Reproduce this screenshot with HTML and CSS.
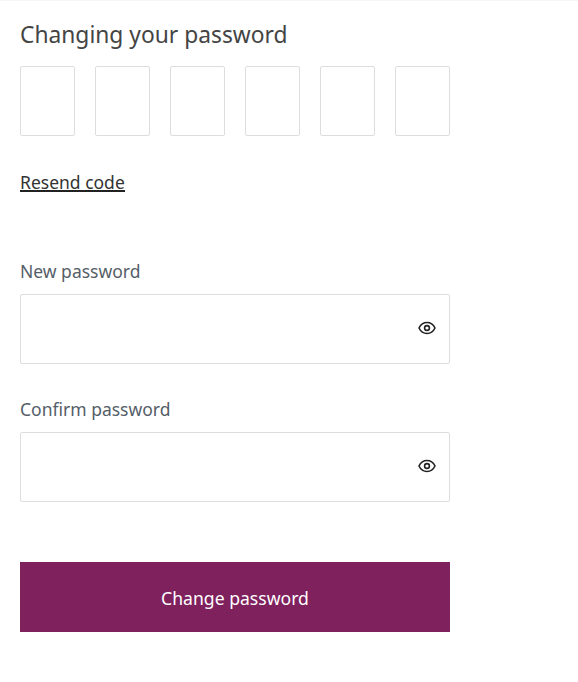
FILE: index.html
```html
<!DOCTYPE html>
<html lang="en">
<head>
<meta charset="utf-8">
<title>Changing your password</title>
<link rel="stylesheet" href="styles.css">
</head>
<body>
<main class="page">
  <h1 class="title">Changing your password</h1>
  <div class="code-row">
    <input class="code-box" type="text" maxlength="1" aria-label="Digit 1">
    <input class="code-box" type="text" maxlength="1" aria-label="Digit 2">
    <input class="code-box" type="text" maxlength="1" aria-label="Digit 3">
    <input class="code-box" type="text" maxlength="1" aria-label="Digit 4">
    <input class="code-box" type="text" maxlength="1" aria-label="Digit 5">
    <input class="code-box" type="text" maxlength="1" aria-label="Digit 6">
  </div>
  <a class="resend" href="#">Resend code</a>
  <div class="field field-first">
    <label class="label" for="new">New password</label>
    <div class="input-wrap">
      <input class="input" id="new" type="password">
      <svg class="eye" viewBox="0 0 18 14" width="18" height="14" aria-hidden="true"><path d="M1 7C2.7 3.5 5.5 1.5 9 1.5S15.3 3.5 17 7C15.3 10.5 12.5 12.5 9 12.5S2.7 10.5 1 7Z" fill="none" stroke="#222" stroke-width="1.6"/><circle cx="9" cy="7" r="2.4" fill="none" stroke="#222" stroke-width="1.6"/></svg>
    </div>
  </div>
  <div class="field">
    <label class="label" for="confirm">Confirm password</label>
    <div class="input-wrap">
      <input class="input" id="confirm" type="password">
      <svg class="eye" viewBox="0 0 18 14" width="18" height="14" aria-hidden="true"><path d="M1 7C2.7 3.5 5.5 1.5 9 1.5S15.3 3.5 17 7C15.3 10.5 12.5 12.5 9 12.5S2.7 10.5 1 7Z" fill="none" stroke="#222" stroke-width="1.6"/><circle cx="9" cy="7" r="2.4" fill="none" stroke="#222" stroke-width="1.6"/></svg>
    </div>
  </div>
  <button class="submit" type="button">Change password</button>
</main>
</body>
</html>
```
FILE: styles.css
```css
* { box-sizing: border-box; }
html, body { margin: 0; padding: 0; background: #fff; }
body { font-family: "Noto Sans", "Open Sans", sans-serif; }
.page {
  padding: 0 128px 0 20px;
  border-top: 1px solid #f5f5f5;
  display: flex;
  flex-direction: column;
  align-items: stretch;
}
.title {
  margin: 18px 0 0;
  font-size: 22.8px;
  line-height: 32px;
  font-weight: 400;
  color: #444;
}
.code-row {
  margin-top: 15px;
  display: flex;
  gap: 20px;
}
.code-box {
  width: 55px;
  height: 70px;
  border: 1px solid #ddd;
  border-radius: 2px;
  background: #fff;
  padding: 0;
}
.resend {
  align-self: flex-start;
  margin-top: 34px;
  font-size: 17.5px;
  line-height: 24px;
  color: #333;
  text-decoration: none;
  border-bottom: 2px solid #222;
  height: 22px;
}
.field { display: flex; flex-direction: column; margin-top: 33px; }
.field-first { margin-top: 67px; }
.label {
  font-size: 17.5px;
  line-height: 24px;
  color: #555e68;
  margin-bottom: 11px;
}
.input-wrap { position: relative; }
.input {
  display: block;
  width: 100%;
  height: 70px;
  border: 1px solid #ddd;
  border-radius: 2px;
  background: #fff;
  padding: 0 40px 0 12px;
}
.eye { position: absolute; right: 14px; top: 27px; }
.submit {
  margin-top: 60px;
  height: 70px;
  border: 0;
  background: #7e215d;
  color: #fff;
  font-family: inherit;
  font-size: 17.6px;
  font-weight: 400;
  padding: 1px 0 0;
}
```
